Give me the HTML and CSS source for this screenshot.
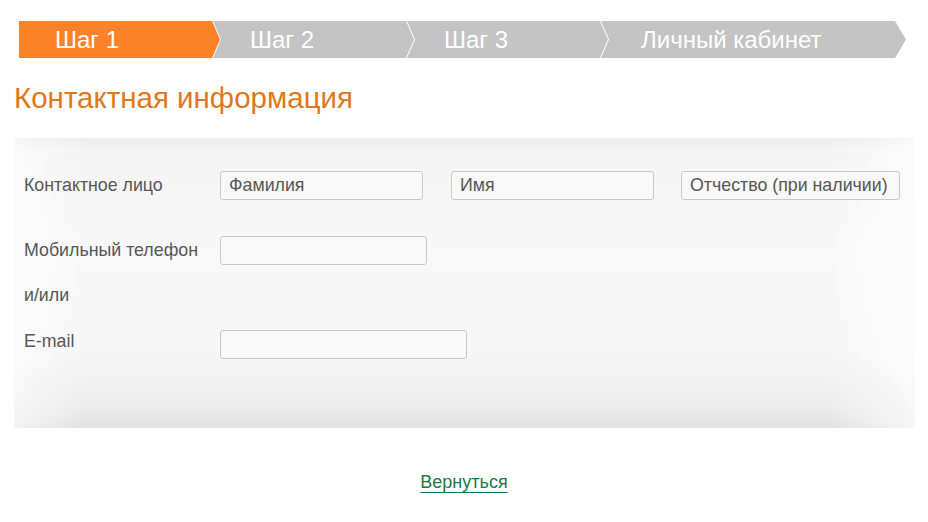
FILE: index.html
```html
<!DOCTYPE html>
<html lang="ru">
<head>
  <meta charset="UTF-8">
  <title>Контактная информация</title>
  <link rel="stylesheet" href="styles.css">
</head>
<body>
  <div class="steps">
    <div class="step step-first active">Шаг 1</div>
    <div class="step">Шаг 2</div>
    <div class="step">Шаг 3</div>
    <div class="step step-last">Личный кабинет</div>
  </div>

  <h1 class="title">Контактная информация</h1>

  <div class="panel">
    <div class="row">
      <label class="lbl">Контактное лицо</label>
      <div class="fields">
        <input type="text" class="inp inp-name" placeholder="Фамилия">
        <input type="text" class="inp inp-name" placeholder="Имя">
        <input type="text" class="inp inp-middle" placeholder="Отчество (при наличии)">
      </div>
    </div>
    <div class="row row-phone">
      <label class="lbl">Мобильный телефон</label>
      <input type="text" class="inp inp-phone">
    </div>
    <div class="row row-or">
      <span class="lbl">и/или</span>
    </div>
    <div class="row row-mail">
      <label class="lbl">E-mail</label>
      <input type="text" class="inp inp-mail">
    </div>
  </div>

  <div class="back">
    <a href="#" class="back-link">Вернуться</a>
  </div>
</body>
</html>
```

FILE: styles.css
```css
body {
  margin: 0;
  font-family: "Liberation Sans", Arial, sans-serif;
  background: #fff;
  color: #555;
}
.steps {
  display: flex;
  height: 37px;
  margin: 21px 0 0 19px;
}
.step {
  width: 201px;
  margin-left: -7px;
  padding-left: 37px;
  box-sizing: border-box;
  background: #c4c4c4;
  color: #fff;
  font-size: 24px;
  line-height: 38px;
  clip-path: polygon(0 0, calc(100% - 8px) 0, 100% 50%, calc(100% - 8px) 100%, 0 100%, 8px 50%);
}
.step-first {
  margin-left: 0;
  width: 201px;
  padding-left: 36px;
  clip-path: polygon(0 0, calc(100% - 8px) 0, 100% 50%, calc(100% - 8px) 100%, 0 100%);
}
.step.active {
  background: #fb8229;
}
.step-last {
  width: 305px;
  padding-left: 40px;
  clip-path: polygon(0 0, calc(100% - 11px) 0, 100% 50%, calc(100% - 11px) 100%, 0 100%, 8px 50%);
}
.title {
  margin: 23px 0 0 14px;
  font-size: 29.5px;
  line-height: 34px;
  font-weight: normal;
  color: #e0781a;
}
.panel {
  margin: 23px 13px 0 14px;
  height: 290px;
  box-sizing: border-box;
  padding: 33px 0 0 10px;
  background:
    linear-gradient(to right, rgba(255,255,255,0.6), rgba(255,255,255,0) 8%, rgba(255,255,255,0) 90%, rgba(255,255,255,0.7)),
    linear-gradient(to bottom, #ececec 0, #f4f4f4 14px, #f8f8f8 40%, #f6f6f6 75%, #ebebeb 93%, #e2e2e2 100%);
}
.row {
  display: flex;
  align-items: center;
}
.lbl {
  width: 196px;
  flex: none;
  font-size: 17.8px;
  color: #575757;
}
.fields {
  display: flex;
  gap: 28px;
}
.inp {
  height: 29px;
  box-sizing: border-box;
  border: 1px solid #c9c9c9;
  border-radius: 3px;
  background: #f8f8f8;
  padding: 0 8px;
  font-family: inherit;
  font-size: 17.8px;
  color: #575757;
}
.inp::placeholder {
  color: #575757;
}
.inp-name {
  width: 203px;
}
.inp-middle {
  width: 219px;
  margin-left: -1px;
}
.row-phone {
  margin-top: 36px;
}
.inp-phone {
  width: 207px;
}
.row-or {
  margin-top: 15px;
  height: 30px;
}
.row-mail {
  margin-top: 21px;
  align-items: flex-start;
}
.row-mail .lbl {
  line-height: 20px;
}
.inp-mail {
  width: 247px;
  margin-top: -1px;
}
.back {
  text-align: center;
  margin: 44px 0 0 0;
}
.back-link {
  font-size: 18px;
  color: #1b7a4c;
  text-decoration: underline;
  text-decoration-thickness: 2px;
  text-underline-offset: 4px;
}
```
